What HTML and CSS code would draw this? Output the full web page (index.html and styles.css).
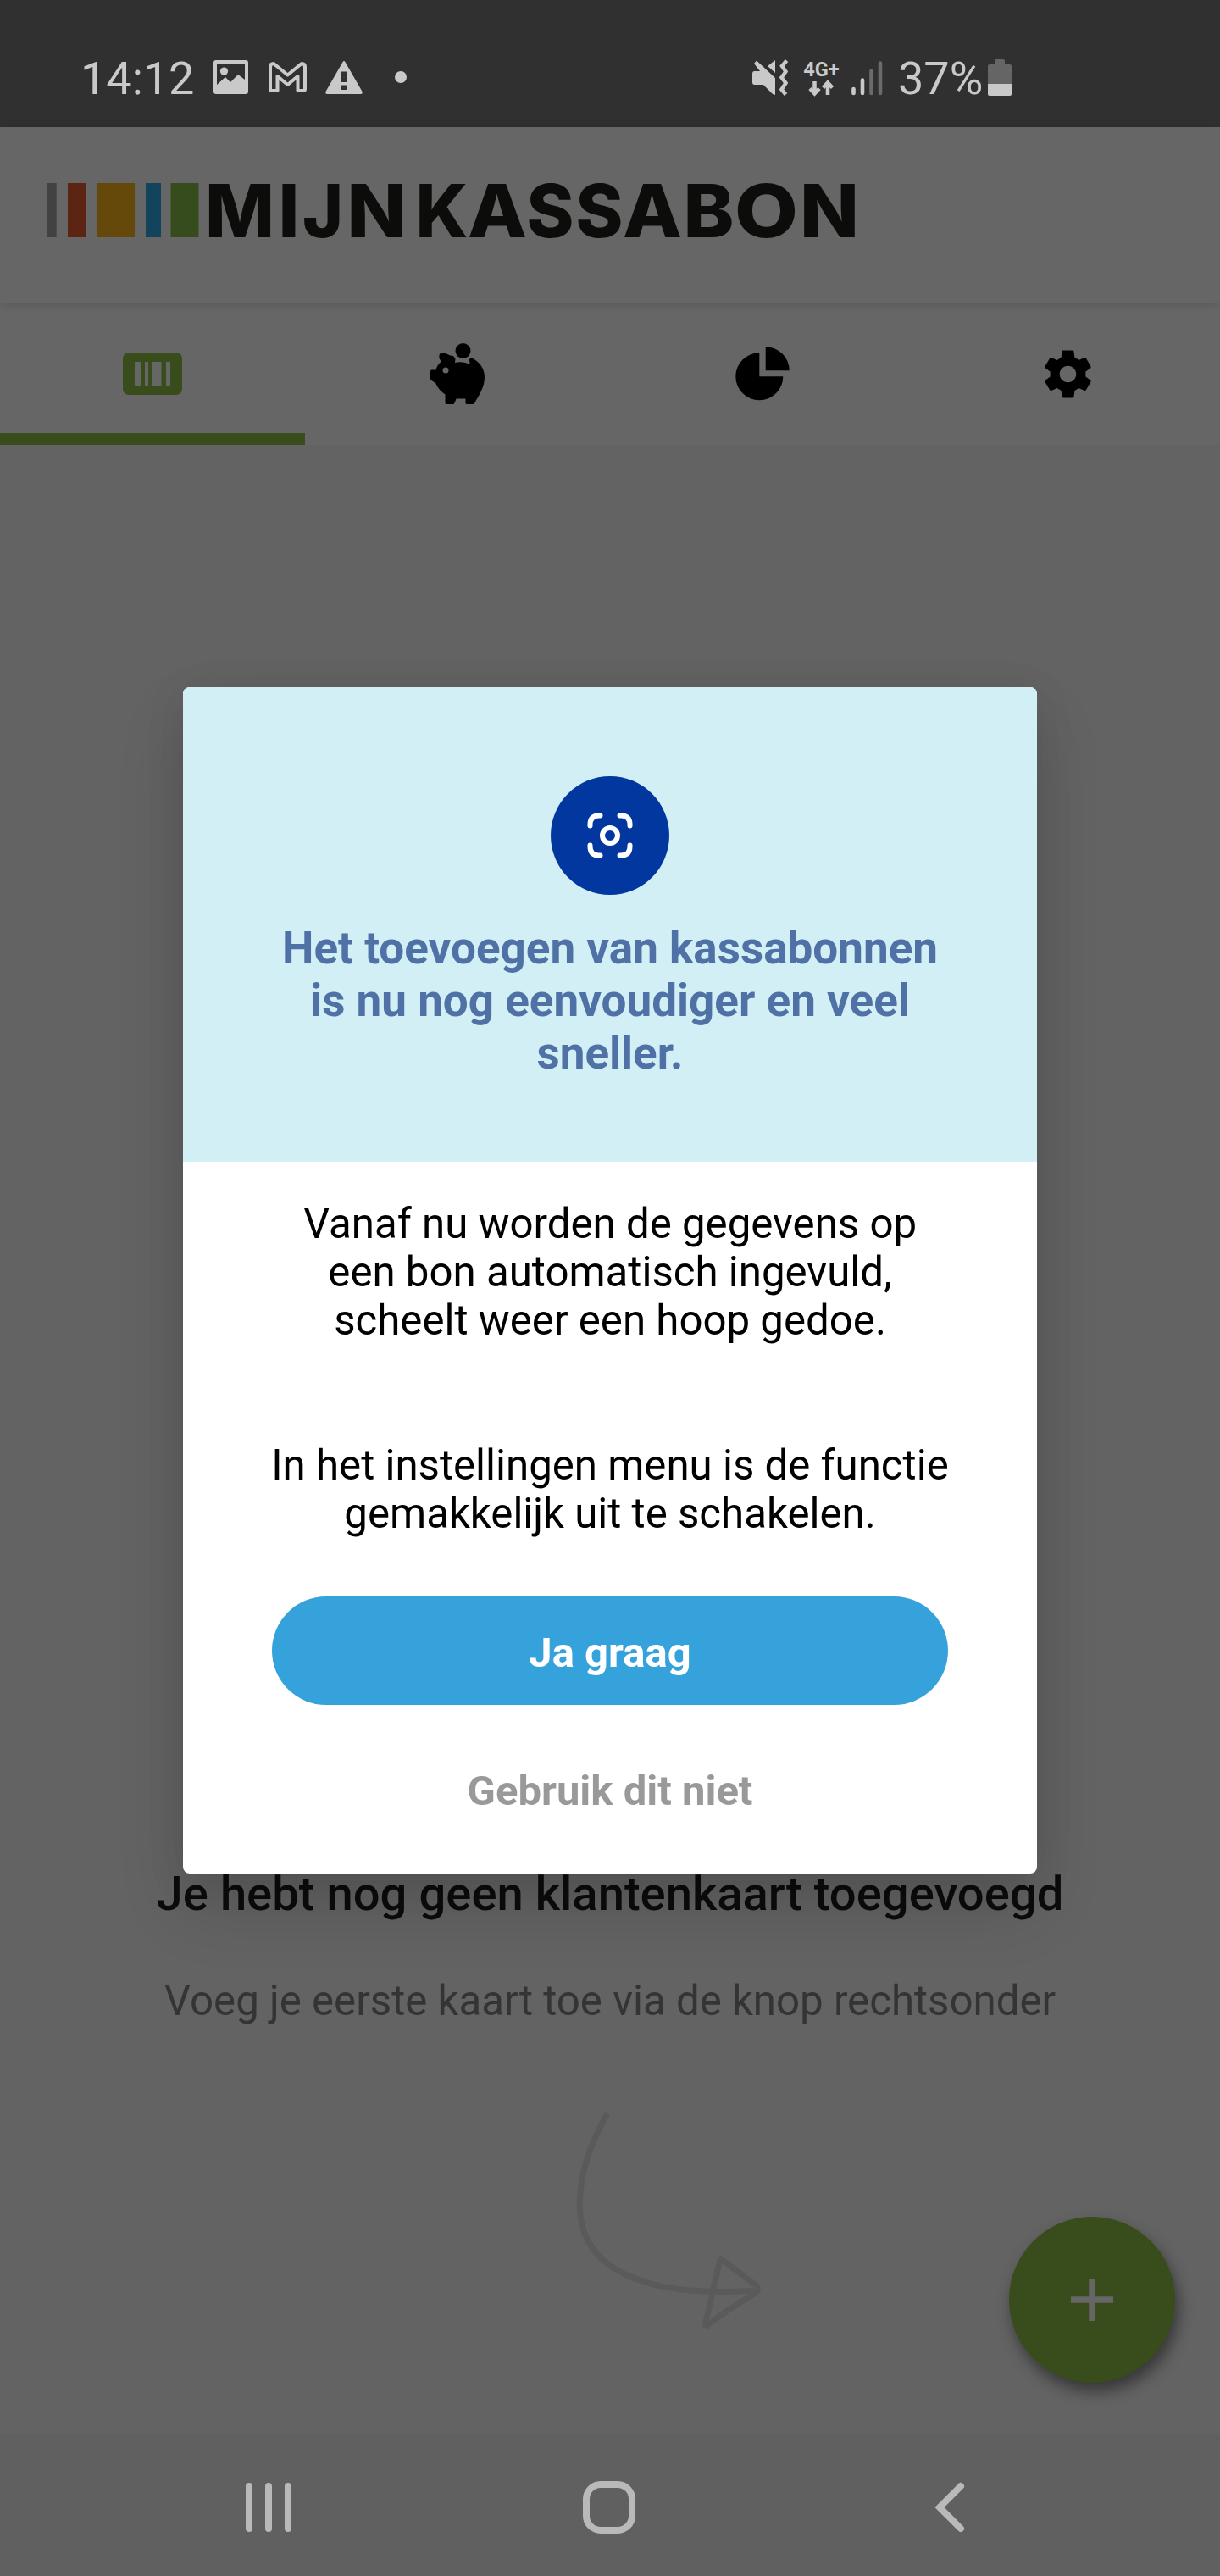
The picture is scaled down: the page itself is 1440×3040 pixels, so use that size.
FILE: index.html
```html
<!DOCTYPE html>
<html lang="nl">
<head>
<meta charset="utf-8">
<title>Mijn Kassabon</title>
<link rel="stylesheet" href="styles.css">
</head>
<body>
<div class="screen">
  <div class="status">
    <div class="status-left">
      <span class="status-text clock">14:12</span>
      <svg class="ic-image" width="41" height="40" viewBox="0 0 41 40"><path fill="#c9c9c9" fill-rule="evenodd" d="M3 0H38Q41 0 41 3V37Q41 40 38 40H3Q0 40 0 37V3Q0 0 3 0ZM4 4V29L14 20L20 26L29 17L37 23V4Z"/><circle cx="12.500" cy="13" r="4.600" fill="#c9c9c9"/></svg>
      <svg class="ic-mail" width="45" height="36" viewBox="0 0 45 36"><path fill="none" stroke="#c9c9c9" stroke-width="4" stroke-linejoin="round" d="M2 32V6Q2 2 6 2L22.500 15.500L39 2Q43 2 43 6V32Q43 34 41 34H34.500V17L22.500 27L10.500 17V34H4Q2 34 2 32Z"/></svg>
      <svg class="ic-warn" width="44" height="39" viewBox="0 0 44 39"><path fill="#c9c9c9" fill-rule="evenodd" d="M20.500 1.200Q22 -1 23.500 1.200L43.500 36Q44.400 38.800 42 39H2Q-.4 38.800.500 36ZM19 12.500V25H25V12.500ZM19 28.500V34H25V28.500Z"/></svg>
      <span class="dot"></span>
    </div>
    <div class="status-right">
      <svg width="42" height="43" viewBox="0 0 42 43"><path fill="#c9c9c9" d="M2.500 14H9L2 5L5 1.500L27 22V42L24 41L13 30H2.500Q0 30 0 27V17Q0 14 2.500 14ZM27 1V16L18 8Z"/><path fill="none" stroke="#c9c9c9" stroke-width="4.500" d="M40.500 1.500L35 8L39.500 14.500L34.500 21.500L39.500 28L34.500 35.500L39.500 41.500"/></svg>
      <div class="network">
        <span class="net-label">4G+</span>
        <svg width="31" height="20" viewBox="0 0 31 20"><path fill="none" stroke="#c9c9c9" stroke-width="4.500" d="M7.500 2V16M2 10.500L7.500 16.500L13 10.500M23 18V4M17.500 9.500L23 3.500L28.500 9.500"/></svg>
      </div>
      <svg class="ic-signal" width="37" height="41" viewBox="0 0 37 41"><g stroke-width="4.600" stroke-linecap="round"><path stroke="#c9c9c9" d="M2.500 33V38M13 22.500V38"/><path stroke="#6b6b6b" d="M23.500 12V38M34 2.500V38"/></g></svg>
      <span class="status-text battery-text">37%</span>
      <svg class="ic-batt" width="28" height="43" viewBox="0 0 28 43"><path fill="#656565" d="M8 2Q8 0 10 0H18Q20 0 20 2V6H26Q28 6 28 8V29H0V8Q0 6 2 6H8Z"/><path fill="#c9c9c9" d="M0 29H28V41Q28 43 26 43H2Q0 43 0 41Z"/></svg>
    </div>
  </div>

  <header class="header">
    <svg width="970" height="120" viewBox="0 -30 970 120" role="img" aria-label="Mijn Kassabon">
      <path fill="#424242" d="M0 2H10.700V66H0Z"/>
      <path fill="#5c2413" d="M24 2H46V66H24Z"/>
      <path fill="#64490b" d="M58.500 2H103V66H58.500Z"/>
      <path fill="#12455c" d="M116 2H134V66H116Z"/>
      <path fill="#374c1c" d="M145.500 2H178.500V66H145.500Z"/>
      <text class="wordmark" y="66"><tspan x="186" textLength="82" lengthAdjust="spacingAndGlyphs">M</tspan><tspan x="272.500">I</tspan><tspan x="301" textLength="48" lengthAdjust="spacingAndGlyphs">J</tspan><tspan x="353.500" textLength="70" lengthAdjust="spacingAndGlyphs">N</tspan></text>
      <text class="wordmark" y="66"><tspan x="434.500" textLength="62" lengthAdjust="spacingAndGlyphs">K</tspan><tspan x="496" textLength="70" lengthAdjust="spacingAndGlyphs">A</tspan><tspan x="565.500" textLength="56" lengthAdjust="spacingAndGlyphs">S</tspan><tspan x="623.500" textLength="56" lengthAdjust="spacingAndGlyphs">S</tspan><tspan x="679" textLength="70" lengthAdjust="spacingAndGlyphs">A</tspan><tspan x="750.500" textLength="60" lengthAdjust="spacingAndGlyphs">B</tspan><tspan x="811" textLength="75" lengthAdjust="spacingAndGlyphs">O</tspan><tspan x="888" textLength="70" lengthAdjust="spacingAndGlyphs">N</tspan></text>
    </svg>
  </header>

  <nav class="tabs">
    <div class="tab tab-active">
      <svg width="70" height="50" viewBox="0 0 70 50"><rect width="70" height="50" rx="7" fill="#384c1c"/><path fill="#666" d="M14 11H21V39H14ZM26 11H30V39H26ZM35 11H45.500V39H35ZM51 11H56V39H51Z"/></svg>
    </div>
    <div class="tab">
      <svg width="64" height="72" viewBox="0 0 64 72"><circle cx="38.500" cy="9" r="9"/><path fill-rule="evenodd" d="M10.500 14C11 11 17 11 20 13C22 14 24 15 25 14.500C28 15 28 17 29.500 18L29 23C35 21.500 41 22 46.500 25V22L45 20L48 17C59 22 64 31 64 40C64 52 57 62 52 71Q51.500 72 50 72H43Q41.500 72 41.500 70.500V65.500H30.500C29.500 68 28.500 71 27.500 72H19Q17.500 72 17.500 70.500V60.500C13 57 9 54 6.500 47.500L1.500 44Q0 43 0 41.500V33Q0 31.500 1.500 31.500H6.500C7.500 27 10 24 13 21.500C10.500 19 10 17 10.500 14ZM18 28.500A3.500 3.500 0 1 0 18 35.500A3.500 3.500 0 1 0 18 28.500Z"/></svg>
    </div>
    <div class="tab">
      <svg width="64" height="64" viewBox="0 0 64 64"><path d="M28.300 7.300A28 28 0 1 0 56.300 35.300H28.300ZM35.700 .3V28.300H63.700A28 28 0 0 0 35.700 .3Z"/></svg>
    </div>
    <div class="tab">
      <svg width="67" height="67" viewBox="0 0 24 24"><path d="M19.430 12.980c.04-.32.07-.64.07-.98s-.03-.66-.07-.98l2.110-1.650c.19-.15.24-.42.12-.64l-2-3.460c-.12-.22-.39-.3-.61-.22l-2.490 1c-.52-.4-1.080-.73-1.690-.98l-.38-2.650C14.460 2.180 14.250 2 14 2h-4c-.25 0-.46.18-.49.42l-.38 2.650c-.61.25-1.170.59-1.690.98l-2.490-1c-.23-.09-.49 0-.61.22l-2 3.460c-.13.22-.07.49.12.64l2.110 1.650c-.04.32-.07.65-.07.98s.03.66.07.98l-2.110 1.650c-.19.15-.24.42-.12.64l2 3.460c.12.22.39.3.61.22l2.490-1c.52.4 1.080.73 1.690.98l.38 2.650c.03.24.24.42.49.42h4c.25 0 .46-.18.49-.42l.38-2.650c.61-.25 1.170-.59 1.690-.98l2.490 1c.23.09.49 0 .61-.22l2-3.460c.12-.22.07-.49-.12-.64l-2.110-1.650zM12 15.500c-1.930 0-3.500-1.570-3.500-3.500s1.570-3.500 3.500-3.500 3.500 1.570 3.500 3.500-1.570 3.500-3.500 3.500z"/></svg>
    </div>
  </nav>

  <main class="content">
    <h2 class="empty-title">Je hebt nog geen klantenkaart toegevoegd</h2>
    <p class="empty-text">Voeg je eerste kaart toe via de knop rechtsonder</p>
    <svg class="arrow" width="220" height="260" viewBox="0 0 220 260"><path fill="none" stroke="#5a5a5a" stroke-width="7" stroke-linejoin="round" d="M38 4C18 40 5 74 5.300 113C6 190 85 222 213 213M169.500 174L213.500 207Q217 212 213 216C195 227 175 238 154 256M171.500 174L152.500 257"/></svg>
  </main>

  <footer class="navbar">
    <svg width="54" height="60" viewBox="0 0 54 60"><path stroke="#b9b9b9" stroke-width="8" stroke-linecap="round" d="M4 5V55M27 5V55M50 5V55"/></svg>
    <svg class="nav-home" width="62" height="62" viewBox="0 0 62 62"><rect x="4" y="4" width="54" height="54" rx="17" fill="none" stroke="#b9b9b9" stroke-width="8"/></svg>
    <svg class="nav-back" width="36" height="60" viewBox="0 0 36 60"><path fill="none" stroke="#b9b9b9" stroke-width="8" stroke-linecap="round" d="M31 5L6 30L31 55"/></svg>
  </footer>

  <div class="fab"><svg width="50" height="50" viewBox="0 0 50 50"><path stroke="#666" stroke-width="7.500" d="M0 25H50M25 0V50"/></svg></div>

  <section class="dialog">
    <div class="dialog-head">
      <div class="badge"><svg width="54" height="54" viewBox="0 0 54 54"><g fill="none" stroke="#fff" stroke-width="6" stroke-linecap="round"><path d="M3.500 15.500V14Q3.500 3.500 14 3.500H15.500M38.500 3.500H40Q50.500 3.500 50.500 14V15.500M50.500 38.500V40Q50.500 50.500 40 50.500H38.500M15.500 50.500H14Q3.500 50.500 3.500 40V38.500"/><circle cx="27" cy="27" r="9"/></g></svg></div>
      <h1 class="dialog-title">Het toevoegen van kassabonnen<br>is nu nog eenvoudiger en veel<br>sneller.</h1>
    </div>
    <div class="dialog-body">
      <p class="copy">Vanaf nu worden de gegevens op<br>een bon automatisch ingevuld,<br>scheelt weer een hoop gedoe.</p>
      <p class="copy">In het instellingen menu is de functie<br>gemakkelijk uit te schakelen.</p>
      <button class="primary">Ja graag</button>
      <button class="secondary">Gebruik dit niet</button>
    </div>
  </section>
</div>
</body>
</html>
```
FILE: styles.css
```css
* { box-sizing: border-box; }
body { margin: 0; font-family: Roboto, "Liberation Sans", sans-serif; }
h1, h2, p { margin: 0; }
svg { display: block; flex: none; }
button { border: 0; padding: 0; font-family: inherit; }

.screen {
  position: relative;
  width: 1440px;
  height: 3040px;
  overflow: hidden;
  display: flex;
  flex-direction: column;
  background: #636363;
}

.status {
  height: 150px;
  background: #303030;
  color: #c9c9c9;
  display: flex;
  justify-content: space-between;
  padding: 70px 246px 0 95px;
}
.status-left, .status-right { display: flex; align-items: flex-start; }
.status-text { font-size: 54px; line-height: 64px; margin-top: -9px; white-space: nowrap; }
.clock { width: 157px; }
.ic-image { margin-top: 1px; }
.ic-mail { margin: 3px 0 0 24px; }
.ic-warn { margin: 2px 0 0 22px; }
.dot { width: 14px; height: 14px; border-radius: 50%; background: #c9c9c9; margin: 14px 0 0 38px; }
.network { display: flex; flex-direction: column; align-items: center; width: 43px; margin-left: 18px; }
.net-label { font-size: 23.500px; line-height: 24px; font-weight: 700; }
.ic-signal { margin: 2px 0 0 14px; }
.battery-text { margin-left: 18px; width: 100px; }
.ic-batt { margin-left: 6px; }

.header {
  position: relative;
  height: 207px;
  padding: 34px 0 0 56px;
  background: #666;
  box-shadow: 0 2px 10px rgba(0, 0, 0, .14);
}
.wordmark { font: 800 87px Inter, "Open Sans", sans-serif; fill: #0c0c0a; }

.tabs { display: flex; height: 168px; background: #666; }
.tab { flex: 1; display: flex; align-items: center; justify-content: center; }
.tab-active { border-bottom: 14px solid #384c1c; padding-top: 14px; }

.content { flex: 1; display: flex; flex-direction: column; align-items: center; padding-top: 1677px; text-align: center; }
.empty-title { font-size: 56.200px; line-height: 66px; font-weight: 500; color: #0c0c0c; white-space: nowrap; }
.empty-text { font-size: 49.200px; line-height: 56px; margin-top: 65px; color: #343434; white-space: nowrap; }
.arrow { margin: 101px 0 0 138px; }

.navbar {
  height: 168px;
  background: #606060;
  display: flex;
  align-items: center;
  padding: 6px 0 0 290px;
}
.nav-home { margin-left: 344px; }
.nav-back { margin-left: 353px; }

.fab {
  position: absolute;
  left: 1191px;
  top: 2616px;
  width: 196px;
  height: 196px;
  border-radius: 50%;
  background: #384c1c;
  display: flex;
  align-items: center;
  justify-content: center;
  box-shadow: 4px 10px 18px rgba(0, 0, 0, .45);
}

.dialog {
  position: absolute;
  left: 216px;
  top: 811px;
  width: 1008px;
  height: 1400px;
  border-radius: 8px;
  overflow: hidden;
  background: #fff;
  text-align: center;
  box-shadow: 0 40px 80px rgba(0, 0, 0, .14), 0 8px 50px rgba(0, 0, 0, .08);
}
.dialog-head {
  height: 560px;
  background: #d1eff5;
  padding-top: 105px;
  display: flex;
  flex-direction: column;
  align-items: center;
}
.badge {
  width: 140px;
  height: 140px;
  border-radius: 50%;
  background: #0237a0;
  display: flex;
  align-items: center;
  justify-content: center;
}
.dialog-title { margin-top: 32px; font-size: 53px; line-height: 62px; font-weight: 700; color: #4f71a6; white-space: nowrap; }
.dialog-body { display: flex; flex-direction: column; align-items: center; padding-top: 45px; }
.copy { font-size: 49.200px; line-height: 57px; color: #000; white-space: nowrap; }
.copy + .copy { margin-top: 114px; }
.primary {
  width: 798px;
  height: 128px;
  margin-top: 69px;
  padding-top: 4px;
  border-radius: 64px;
  background: #36a2dc;
  color: #fff;
  font-size: 49px;
  font-weight: 700;
}
.secondary { margin-top: 73px; background: none; color: #999; font-size: 49px; line-height: 57px; font-weight: 700; }
```
